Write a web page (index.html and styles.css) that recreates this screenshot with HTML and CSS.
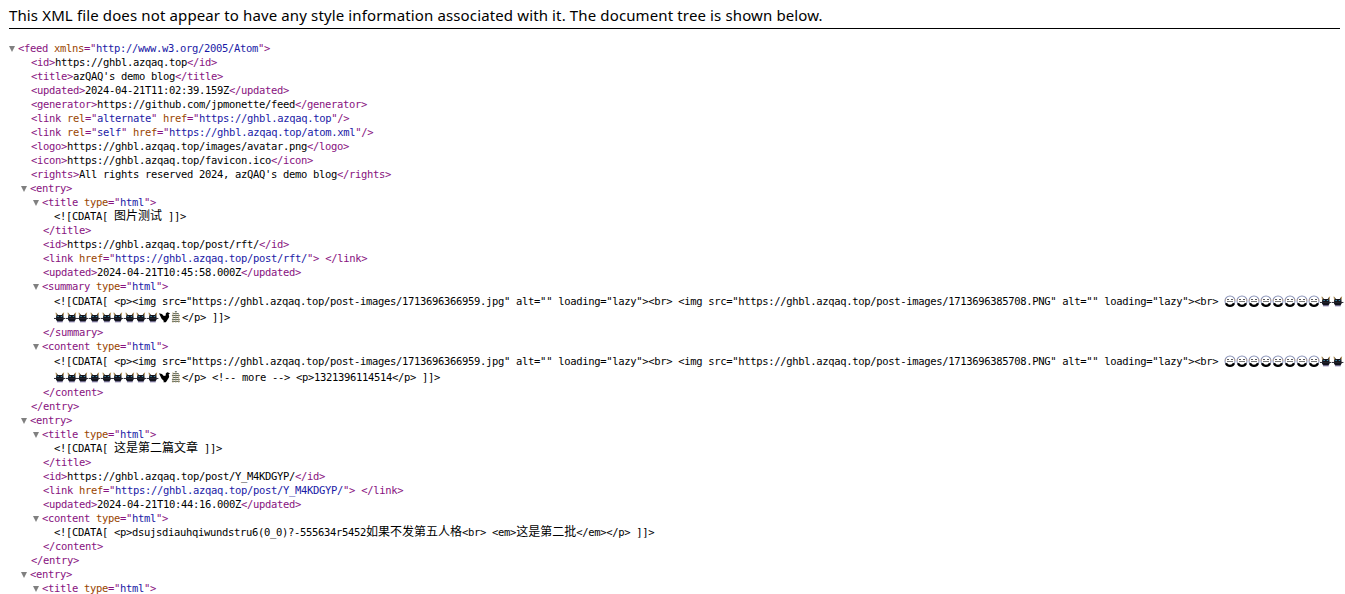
FILE: index.html
```
<!DOCTYPE html>
<html lang="en">
<head>
<meta charset="utf-8">
<title>atom.xml</title>
<link rel="stylesheet" href="styles.css">
</head>
<body>
<svg class="defs" width="0" height="0" aria-hidden="true">
  <symbol id="face" viewBox="0 0 12 12">
    <circle cx="6" cy="6" r="5" fill="#fff" stroke="#8a93b8" stroke-width="1.1"/>
    <path d="M1 5h1M10 5h1" stroke="#d0a070" stroke-width="1"/>
    <path d="M3 4.500h2M7 4.500h2" stroke="#555" stroke-width="1"/>
    <path d="M3 6.500h6" stroke="#777" stroke-width="1"/>
    <path d="M2 8.300C3.500 11.700 8.500 11.700 10 8.300" fill="none" stroke="#000" stroke-width="2.200"/>
  </symbol>
  <symbol id="cat" viewBox="0 0 12 12">
    <path d="M2.500 1.500l1.500 2.500h4l1.500-2.500.5 7-1.500 2.500h-5L2 8.500z" fill="#11131c"/>
    <path d="M2 1.500l.7 3M10 1.500l-.7 3" stroke="#b8924e" stroke-width="1"/>
    <path d="M0 7.500h12" stroke="#23232b" stroke-width="1"/>
    <path d="M3.500 5.500h1.500M7 5.500h1.500" stroke="#3f8fb0" stroke-width="1"/>
    <path d="M3 11h6" stroke="#8078a8" stroke-width="1"/>
  </symbol>
  <symbol id="bird" viewBox="0 0 12 12">
    <path d="M0 2l3 1 2 2 2-.5V2.500L8.500 1 10 1.500l1.500 1-1.500.5.5 3L8 10l-1 1.500H4.500L5 10 2.500 7.500z" fill="#000"/>
  </symbol>
  <symbol id="tower" viewBox="0 0 12 12">
    <path d="M5 .5h2M3 2.500h6M2 4.500h8M3 6.500h6M2 8.500h8M2 10.500h8" stroke="#4a5a50" stroke-width="1"/>
    <path d="M3 1v11M9 3v9M6 1v11" stroke="#b09868" stroke-width="1" opacity=".7"/>
  </symbol>
</svg>

<div class="notice">This XML file does not appear to have any style information associated with it. The document tree is shown below.</div>

<div class="tree">
  <div class="node">
    <div class="line"><i class="arrow"></i><span class="tag">&lt;feed <b class="attr">xmlns</b>="<b class="val">http://www.w3.org/2005/Atom</b>"&gt;</span></div>
    <div class="kids">
      <div class="line"><span class="tag">&lt;id&gt;</span>https://ghbl.azqaq.top<span class="tag">&lt;/id&gt;</span></div>
      <div class="line"><span class="tag">&lt;title&gt;</span>azQAQ's demo blog<span class="tag">&lt;/title&gt;</span></div>
      <div class="line"><span class="tag">&lt;updated&gt;</span>2024-04-21T11:02:39.159Z<span class="tag">&lt;/updated&gt;</span></div>
      <div class="line"><span class="tag">&lt;generator&gt;</span>https://github.com/jpmonette/feed<span class="tag">&lt;/generator&gt;</span></div>
      <div class="line"><span class="tag">&lt;link <b class="attr">rel</b>="<b class="val">alternate</b>" <b class="attr">href</b>="<b class="val">https://ghbl.azqaq.top</b>"/&gt;</span></div>
      <div class="line"><span class="tag">&lt;link <b class="attr">rel</b>="<b class="val">self</b>" <b class="attr">href</b>="<b class="val">https://ghbl.azqaq.top/atom.xml</b>"/&gt;</span></div>
      <div class="line"><span class="tag">&lt;logo&gt;</span>https://ghbl.azqaq.top/images/avatar.png<span class="tag">&lt;/logo&gt;</span></div>
      <div class="line"><span class="tag">&lt;icon&gt;</span>https://ghbl.azqaq.top/favicon.ico<span class="tag">&lt;/icon&gt;</span></div>
      <div class="line"><span class="tag">&lt;rights&gt;</span>All rights reserved 2024, azQAQ's demo blog<span class="tag">&lt;/rights&gt;</span></div>

      <div class="line"><i class="arrow"></i><span class="tag">&lt;entry&gt;</span></div>
      <div class="kids">
        <div class="line"><i class="arrow"></i><span class="tag">&lt;title <b class="attr">type</b>="<b class="val">html</b>"&gt;</span></div>
        <div class="cdata">&lt;![CDATA[ <span class="cjk">图片测试</span> ]]&gt;</div>
        <div class="line"><span class="tag">&lt;/title&gt;</span></div>
        <div class="line"><span class="tag">&lt;id&gt;</span>https://ghbl.azqaq.top/post/rft/<span class="tag">&lt;/id&gt;</span></div>
        <div class="line"><span class="tag">&lt;link <b class="attr">href</b>="<b class="val">https://ghbl.azqaq.top/post/rft/</b>"&gt;</span> <span class="tag">&lt;/link&gt;</span></div>
        <div class="line"><span class="tag">&lt;updated&gt;</span>2024-04-21T10:45:58.000Z<span class="tag">&lt;/updated&gt;</span></div>
        <div class="line"><i class="arrow"></i><span class="tag">&lt;summary <b class="attr">type</b>="<b class="val">html</b>"&gt;</span></div>
        <div class="cdata tall">&lt;![CDATA[ &lt;p&gt;&lt;img src="https://ghbl.azqaq.top/post-images/1713696366959.jpg" alt="" loading="lazy"&gt;&lt;br&gt; &lt;img src="https://ghbl.azqaq.top/post-images/1713696385708.PNG" alt="" loading="lazy"&gt;&lt;br&gt; <svg class="ico"><use href="#face"/></svg><svg class="ico"><use href="#face"/></svg><svg class="ico"><use href="#face"/></svg><svg class="ico"><use href="#face"/></svg><svg class="ico"><use href="#face"/></svg><svg class="ico"><use href="#face"/></svg><svg class="ico"><use href="#face"/></svg><svg class="ico"><use href="#face"/></svg><svg class="ico nar"><use href="#cat"/></svg><svg class="ico nar"><use href="#cat"/></svg><svg class="ico nar"><use href="#cat"/></svg><svg class="ico nar"><use href="#cat"/></svg><svg class="ico nar"><use href="#cat"/></svg><svg class="ico nar"><use href="#cat"/></svg><svg class="ico nar"><use href="#cat"/></svg><svg class="ico nar"><use href="#cat"/></svg><svg class="ico nar"><use href="#cat"/></svg><svg class="ico nar"><use href="#cat"/></svg><svg class="ico nar"><use href="#cat"/></svg><svg class="ico nar"><use href="#bird"/></svg><svg class="ico nar"><use href="#tower"/></svg>&lt;/p&gt; ]]&gt;</div>
        <div class="line"><span class="tag">&lt;/summary&gt;</span></div>
        <div class="line"><i class="arrow"></i><span class="tag">&lt;content <b class="attr">type</b>="<b class="val">html</b>"&gt;</span></div>
        <div class="cdata tall">&lt;![CDATA[ &lt;p&gt;&lt;img src="https://ghbl.azqaq.top/post-images/1713696366959.jpg" alt="" loading="lazy"&gt;&lt;br&gt; &lt;img src="https://ghbl.azqaq.top/post-images/1713696385708.PNG" alt="" loading="lazy"&gt;&lt;br&gt; <svg class="ico"><use href="#face"/></svg><svg class="ico"><use href="#face"/></svg><svg class="ico"><use href="#face"/></svg><svg class="ico"><use href="#face"/></svg><svg class="ico"><use href="#face"/></svg><svg class="ico"><use href="#face"/></svg><svg class="ico"><use href="#face"/></svg><svg class="ico"><use href="#face"/></svg><svg class="ico nar"><use href="#cat"/></svg><svg class="ico nar"><use href="#cat"/></svg><svg class="ico nar"><use href="#cat"/></svg><svg class="ico nar"><use href="#cat"/></svg><svg class="ico nar"><use href="#cat"/></svg><svg class="ico nar"><use href="#cat"/></svg><svg class="ico nar"><use href="#cat"/></svg><svg class="ico nar"><use href="#cat"/></svg><svg class="ico nar"><use href="#cat"/></svg><svg class="ico nar"><use href="#cat"/></svg><svg class="ico nar"><use href="#cat"/></svg><svg class="ico nar"><use href="#bird"/></svg><svg class="ico nar"><use href="#tower"/></svg>&lt;/p&gt; &lt;!-- more --&gt; &lt;p&gt;1321396114514&lt;/p&gt; ]]&gt;</div>
        <div class="line"><span class="tag">&lt;/content&gt;</span></div>
      </div>
      <div class="line"><span class="tag">&lt;/entry&gt;</span></div>

      <div class="line"><i class="arrow"></i><span class="tag">&lt;entry&gt;</span></div>
      <div class="kids">
        <div class="line"><i class="arrow"></i><span class="tag">&lt;title <b class="attr">type</b>="<b class="val">html</b>"&gt;</span></div>
        <div class="cdata">&lt;![CDATA[ <span class="cjk">这是第二篇文章</span> ]]&gt;</div>
        <div class="line"><span class="tag">&lt;/title&gt;</span></div>
        <div class="line"><span class="tag">&lt;id&gt;</span>https://ghbl.azqaq.top/post/Y_M4KDGYP/<span class="tag">&lt;/id&gt;</span></div>
        <div class="line"><span class="tag">&lt;link <b class="attr">href</b>="<b class="val">https://ghbl.azqaq.top/post/Y_M4KDGYP/</b>"&gt;</span> <span class="tag">&lt;/link&gt;</span></div>
        <div class="line"><span class="tag">&lt;updated&gt;</span>2024-04-21T10:44:16.000Z<span class="tag">&lt;/updated&gt;</span></div>
        <div class="line"><i class="arrow"></i><span class="tag">&lt;content <b class="attr">type</b>="<b class="val">html</b>"&gt;</span></div>
        <div class="cdata">&lt;![CDATA[ &lt;p&gt;dsujsdiauhqiwundstru6(0_0)?-555634r5452<span class="cjk">如果不发第五人格</span>&lt;br&gt; &lt;em&gt;<span class="cjk">这是第二批</span>&lt;/em&gt;&lt;/p&gt; ]]&gt;</div>
        <div class="line"><span class="tag">&lt;/content&gt;</span></div>
      </div>
      <div class="line"><span class="tag">&lt;/entry&gt;</span></div>

      <div class="line"><i class="arrow"></i><span class="tag">&lt;entry&gt;</span></div>
      <div class="kids">
        <div class="line"><i class="arrow"></i><span class="tag">&lt;title <b class="attr">type</b>="<b class="val">html</b>"&gt;</span></div>
      </div>
    </div>
  </div>
</div>
</body>
</html>
```
FILE: styles.css
```
html, body {
  margin: 0;
  background: #fff;
}
html {
  height: 594px;
  overflow: hidden;
}
.defs {
  position: absolute;
}
.notice {
  margin: 0 5px 0 9px;
  height: 28px;
  border-bottom: 1px solid #000;
  font: 15px/30px "Noto Sans", sans-serif;
  letter-spacing: 0.13px;
  color: #000;
}
.tree {
  padding: 12px 0 0 19px;
  font: 10.5px/14px "DejaVu Sans Mono", monospace;
  letter-spacing: -0.32px;
  color: #000;
}
.line {
  height: 14px;
  white-space: pre;
}
.kids {
  margin-left: 12px;
}
.cdata {
  margin-left: 11px;
  min-height: 14px;
  max-height: 14px;
  line-height: 14px;
}
.cdata.tall {
  max-height: none;
  line-height: 16px;
}
.tag {
  color: #881280;
}
.attr {
  color: #994500;
  font-weight: normal;
}
.val {
  color: #1a1aa6;
  font-weight: normal;
}
.cjk {
  font-family: "Noto Sans CJK SC", sans-serif;
  font-size: 12px;
  letter-spacing: 0;
  line-height: 1;
}
.arrow {
  display: inline-block;
  width: 0;
  height: 0;
  margin: 0 3px 1px -10px;
  border-style: solid;
  border-width: 6px 3.5px 0;
  border-color: #808080 transparent transparent;
  vertical-align: middle;
}
.ico {
  display: inline-block;
  width: 12px;
  height: 12px;
  vertical-align: -2px;
}
.ico.nar {
  width: 11.64px;
}
```
